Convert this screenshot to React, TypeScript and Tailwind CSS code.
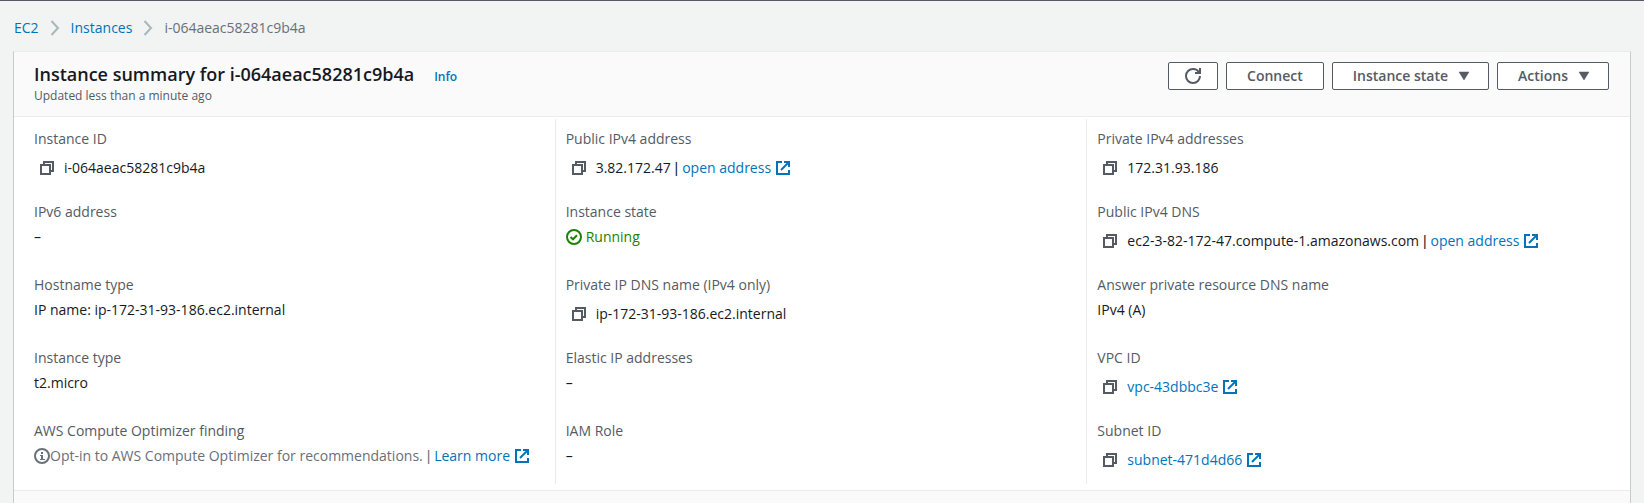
import type { ReactNode } from "react";

function CopyIcon() {
  return (
    <svg viewBox="0 0 16 16" className="size-4" fill="none" stroke="currentColor" strokeWidth="2" aria-hidden="true">
      <path d="M2 5h9v9H2z" />
      <path d="M5 5V2h9v9h-3" />
    </svg>
  );
}

function ExternalIcon() {
  return (
    <svg viewBox="0 0 16 16" className="size-4 shrink-0" fill="none" stroke="currentColor" strokeWidth="2" aria-hidden="true">
      <path d="M14 10v4H2V2h5" />
      <path d="M9 2h5v5" />
      <path d="M6 10l8-8" />
    </svg>
  );
}

function RefreshIcon() {
  return (
    <svg viewBox="0 0 16 16" className="size-4" fill="none" stroke="currentColor" strokeWidth="2" aria-hidden="true">
      <path d="M10 5h5V0" />
      <path d="M15 8a6.957 6.957 0 01-7 7 6.957 6.957 0 01-7-7 6.957 6.957 0 017-7 6.870 6.870 0 016.300 4" />
    </svg>
  );
}

function CheckIcon() {
  return (
    <svg viewBox="0 0 16 16" className="size-4" fill="none" stroke="currentColor" strokeWidth="2" aria-hidden="true">
      <circle cx="8" cy="8" r="7" />
      <path d="M4.500 8l2.500 2.300 4-4" />
    </svg>
  );
}

function InfoIcon() {
  return (
    <svg viewBox="0 0 16 16" className="size-4" fill="none" stroke="currentColor" strokeWidth="2" aria-hidden="true">
      <circle cx="8" cy="8" r="7" />
      <path d="M8 4v2" />
      <path d="M8 7v5" />
      <path d="M6 7.500h2M6 11.500h5" strokeWidth="1" />
    </svg>
  );
}

function CaretIcon() {
  return (
    <svg viewBox="0 0 16 16" className="-mr-1 size-4" aria-hidden="true">
      <path d="M3 4h10l-5 8z" fill="currentColor" stroke="currentColor" strokeLinejoin="round" strokeWidth="0.500" />
    </svg>
  );
}

function Chevron() {
  return (
    <svg viewBox="0 0 16 16" className="mx-2 size-4 text-[#aab7b8]" fill="none" stroke="currentColor" strokeWidth="2" aria-hidden="true">
      <path d="M4.500 1l6.500 7-6.500 7" />
    </svg>
  );
}

function Separator() {
  return <span className="font-['Liberation_Sans',sans-serif]">{" | "}</span>;
}

function ExternalLink({ children }: { children: ReactNode }) {
  return (
    <a href="#" className="inline-flex items-center gap-1 text-[#0073bb]">
      {children}
      <ExternalIcon />
    </a>
  );
}

function Copyable({ children }: { children: ReactNode }) {
  return (
    <div className="flex h-[30px] items-center whitespace-pre pl-[5px]">
      <button type="button" aria-label="Copy" className="mr-[9px] text-[#545b64]">
        <CopyIcon />
      </button>
      {children}
    </div>
  );
}

function Button({ children, label }: { children: ReactNode; label?: string }) {
  return (
    <button
      type="button"
      aria-label={label}
      className="flex h-7 items-center gap-2 rounded-xs border border-[#545b64] bg-white px-5 font-semibold text-[#545b64]"
    >
      {children}
    </button>
  );
}

type Field = { label: string; value: ReactNode };

const columns: Field[][] = [
  [
    { label: "Instance ID", value: <Copyable>i-064aeac58281c9b4a</Copyable> },
    { label: "IPv6 address", value: "–" },
    { label: "Hostname type", value: "IP name: ip-172-31-93-186.ec2.internal" },
    { label: "Instance type", value: "t2.micro" },
    {
      label: "AWS Compute Optimizer finding",
      value: (
        <div className="flex items-center whitespace-pre text-[#687078]">
          <InfoIcon />
          Opt-in to AWS Compute Optimizer for recommendations.
          <Separator />
          <ExternalLink>Learn more</ExternalLink>
        </div>
      ),
    },
  ],
  [
    {
      label: "Public IPv4 address",
      value: (
        <Copyable>
          3.82.172.47
          <Separator />
          <ExternalLink>open address</ExternalLink>
        </Copyable>
      ),
    },
    {
      label: "Instance state",
      value: (
        <div className="flex items-center gap-1 text-[#1d8102]">
          <CheckIcon />
          Running
        </div>
      ),
    },
    { label: "Private IP DNS name (IPv4 only)", value: <Copyable>ip-172-31-93-186.ec2.internal</Copyable> },
    { label: "Elastic IP addresses", value: "–" },
    { label: "IAM Role", value: "–" },
  ],
  [
    { label: "Private IPv4 addresses", value: <Copyable>172.31.93.186</Copyable> },
    {
      label: "Public IPv4 DNS",
      value: (
        <Copyable>
          ec2-3-82-172-47.compute-1.amazonaws.com
          <Separator />
          <ExternalLink>open address</ExternalLink>
        </Copyable>
      ),
    },
    { label: "Answer private resource DNS name", value: "IPv4 (A)" },
    {
      label: "VPC ID",
      value: (
        <Copyable>
          <ExternalLink>vpc-43dbbc3e</ExternalLink>
        </Copyable>
      ),
    },
    {
      label: "Subnet ID",
      value: (
        <Copyable>
          <ExternalLink>subnet-471d4d66</ExternalLink>
        </Copyable>
      ),
    },
  ],
];

export default function App() {
  return (
    <div className="flex min-h-screen flex-col border-t border-[#545b64] bg-[#f2f3f3] px-[13px] font-['Open_Sans','Noto_Sans',sans-serif] text-[14px] leading-[22px] text-[#16191f]">
      <nav aria-label="Breadcrumb" className="flex h-[50px] items-center pl-px pt-1">
        <a href="#" className="text-[#0073bb]">EC2</a>
        <Chevron />
        <a href="#" className="text-[#0073bb]">Instances</a>
        <Chevron />
        <span className="text-[#687078]">i-064aeac58281c9b4a</span>
      </nav>

      <main className="flex flex-1 flex-col border-x border-t border-x-[#c6cccc] border-t-[#eaeded] bg-white">
        <header className="flex items-start justify-between border-b border-[#eaeded] bg-[#fafafa] pb-3 pl-5 pr-[21px] pt-2">
          <div>
            <div className="flex items-baseline gap-5">
              <h1 className="text-[18px] font-semibold leading-7">Instance summary for i-064aeac58281c9b4a</h1>
              <a href="#" className="text-[12px] font-semibold text-[#0073bb]">Info</a>
            </div>
            <p className="text-[12px] leading-4 text-[#545b64]">Updated less than a minute ago</p>
          </div>
          <div className="flex gap-2 pt-[2px]">
            <Button label="Refresh">
              <span className="-mx-1"><RefreshIcon /></span>
            </Button>
            <Button>Connect</Button>
            <Button>Instance state <CaretIcon /></Button>
            <Button>Actions <CaretIcon /></Button>
          </div>
        </header>

        <div className="grid grid-cols-3 pb-[6px] pl-[9px] pr-3 pt-[2px]">
          {columns.map((fields, i) => (
            <dl
              key={i}
              className="flex flex-col gap-[17px] border-l border-[#eaeded] pb-2 pl-[10px] pt-[9px] first:border-transparent"
            >
              {fields.map((field) => (
                <div key={field.label} className="min-h-14">
                  <dt className="text-[#545b64]">{field.label}</dt>
                  <dd className="mt-[3px]">{field.value}</dd>
                </div>
              ))}
            </dl>
          ))}
        </div>

        <div className="flex-1 border-t border-[#eaeded] bg-[#fafafa]" />
      </main>
    </div>
  );
}
